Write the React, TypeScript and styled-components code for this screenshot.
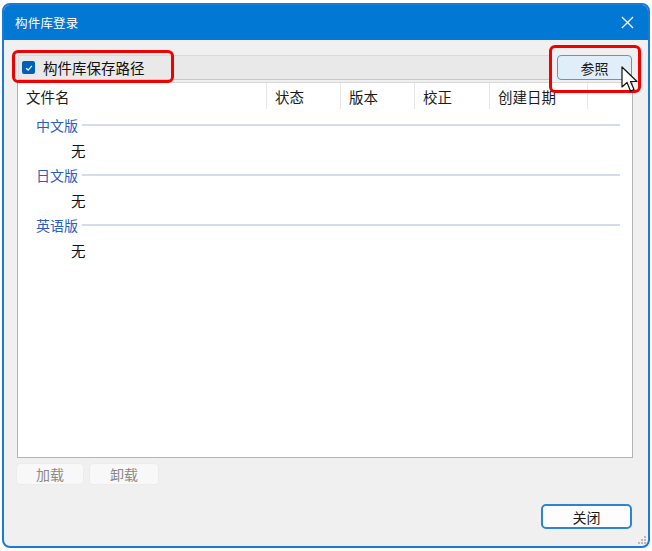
import styled, { createGlobalStyle } from 'styled-components';

const GlobalStyle = createGlobalStyle`
  html, body {
    margin: 0;
    padding: 0;
    background: #ffffff;
  }
  body {
    font-family: "Noto Sans CJK SC", "Noto Sans", sans-serif;
  }
`;

const columns = [
  { label: '文件名', width: 249 },
  { label: '状态', width: 74 },
  { label: '版本', width: 74 },
  { label: '校正', width: 75 },
  { label: '创建日期', width: 98 },
];

const groups = ['中文版', '日文版', '英语版'];

export default function App() {
  return (
    <>
      <GlobalStyle />
      <Page>
        <Window>
          <TitleBar>
            <span className="title">构件库登录</span>
            <CloseIcon viewBox="0 0 14 14">
              <path d="M1 1 L13 13 M13 1 L1 13" />
            </CloseIcon>
          </TitleBar>
          <Body>
            <PathRow>
              <PathField>
                <CheckBox>
                  <svg viewBox="0 0 12 12" width="10" height="10">
                    <path d="M2.5 6.2 L5 8.5 L9.5 3.5" />
                  </svg>
                </CheckBox>
                <span>构件库保存路径</span>
              </PathField>
              <BrowseButton>参照</BrowseButton>
              <Highlight $left={-6} $top={-5} $width={162} $height={33} />
              <Highlight $left={531} $top={-10} $width={92} $height={48} />
              <Cursor viewBox="0 0 20 30">
                <path d="M2 2 L2 22 L7 17.5 L10.5 26 L14 24.5 L10.5 16.5 L17 16.5 Z" />
              </Cursor>
            </PathRow>
            <ListPanel>
              <HeaderRow>
                {columns.map((c) => (
                  <HeaderCell key={c.label} $width={c.width}>
                    {c.label}
                  </HeaderCell>
                ))}
                <HeaderCell $width={0} $last />
              </HeaderRow>
              {groups.map((g) => (
                <div key={g}>
                  <GroupRow>
                    <span>{g}</span>
                    <GroupLine />
                  </GroupRow>
                  <ItemRow>无</ItemRow>
                </div>
              ))}
            </ListPanel>
            <ActionRow>
              <SmallButton $width={68}>加载</SmallButton>
              <SmallButton $width={70}>卸载</SmallButton>
            </ActionRow>
            <Footer>
              <CloseButton>关闭</CloseButton>
            </Footer>
            <Grip viewBox="0 0 10 10">
              <rect x="7" y="1" width="2" height="2" />
              <rect x="4" y="4" width="2" height="2" />
              <rect x="7" y="4" width="2" height="2" />
              <rect x="1" y="7" width="2" height="2" />
              <rect x="4" y="7" width="2" height="2" />
              <rect x="7" y="7" width="2" height="2" />
            </Grip>
          </Body>
        </Window>
      </Page>
    </>
  );
}

const Page = styled.div`
  padding: 3px 0 0 2px;
  width: 652px;
  height: 551px;
  box-sizing: border-box;
`;

const Window = styled.div`
  width: 648px;
  height: 545px;
  box-sizing: border-box;
  border: 2px solid #1a7ad4;
  border-radius: 8px;
  overflow: hidden;
  display: flex;
  flex-direction: column;
  background: #f0f0f0;
`;

const TitleBar = styled.div`
  height: 35px;
  flex: none;
  background: #0078d4;
  color: #ffffff;
  display: flex;
  align-items: center;
  justify-content: space-between;
  padding: 0 14px 0 11px;
  font-size: 12.5px;
  .title {
    letter-spacing: 0.2px;
  }
`;

const CloseIcon = styled.svg`
  width: 13px;
  height: 13px;
  stroke: #ffffff;
  stroke-width: 1.4;
  fill: none;
`;

const Body = styled.div`
  flex: 1;
  position: relative;
  display: flex;
  flex-direction: column;
  padding: 15px 13px 0 13px;
`;

const PathRow = styled.div`
  position: relative;
  display: flex;
  align-items: center;
  gap: 7px;
  height: 25px;
  margin-left: 1px;
`;

const PathField = styled.div`
  width: 532px;
  height: 25px;
  box-sizing: border-box;
  display: flex;
  align-items: center;
  gap: 8px;
  padding-left: 3px;
  background: #e9e9e9;
  border: 1px solid #dadada;
  border-bottom-color: #c8c8c8;
  font-size: 14.5px;
  color: #111111;
`;

const CheckBox = styled.span`
  width: 13px;
  height: 13px;
  border-radius: 2px;
  background: #005fb8;
  display: inline-flex;
  align-items: center;
  justify-content: center;
  svg {
    stroke: #ffffff;
    stroke-width: 1.5;
    fill: none;
  }
`;

const BrowseButton = styled.button`
  width: 75px;
  height: 25px;
  box-sizing: border-box;
  border: 1px solid #4a9de0;
  border-radius: 4px;
  background: #e0eef9;
  font-family: inherit;
  font-size: 14px;
  color: #1b1b1b;
  padding: 0;
`;

const Highlight = styled.div<{ $left: number; $top: number; $width: number; $height: number }>`
  position: absolute;
  left: ${(p) => p.$left}px;
  top: ${(p) => p.$top}px;
  width: ${(p) => p.$width}px;
  height: ${(p) => p.$height}px;
  box-sizing: border-box;
  border: 3px solid #f00000;
  border-radius: 6px;
  pointer-events: none;
  z-index: 2;
`;

const Cursor = styled.svg`
  position: absolute;
  left: 602px;
  top: 10px;
  width: 20px;
  height: 30px;
  fill: #ffffff;
  stroke: #111111;
  stroke-width: 1.2;
  stroke-linejoin: round;
  z-index: 3;
`;

const ListPanel = styled.div`
  margin-top: 2px;
  width: 616px;
  height: 376px;
  box-sizing: border-box;
  background: #ffffff;
  border: 1px solid #b4b4b4;
  border-top-color: #d8d8d8;
`;

const HeaderRow = styled.div`
  display: flex;
  height: 30px;
  align-items: stretch;
`;

const HeaderCell = styled.div<{ $width: number; $last?: boolean }>`
  width: ${(p) => p.$width}px;
  flex: ${(p) => (p.$last ? '1' : 'none')};
  box-sizing: border-box;
  padding: 3px 0 0 8px;
  font-size: 14.5px;
  color: #1b1b1b;
  border-right: ${(p) => (p.$last ? 'none' : '1px solid #e6e6e6')};
  margin: 0 0 4px 0;
`;

const GroupRow = styled.div`
  display: flex;
  align-items: center;
  height: 25px;
  margin-top: -1px;
  margin-bottom: 1px;
  padding: 0 12px 0 18px;
  gap: 4px;
  font-size: 14px;
  color: #2c5cc4;
`;

const GroupLine = styled.div`
  flex: 1;
  height: 2px;
  background: #d2dcf0;
`;

const ItemRow = styled.div`
  height: 25px;
  display: flex;
  align-items: center;
  padding-left: 53px;
  font-size: 14.5px;
  color: #111111;
`;

const ActionRow = styled.div`
  display: flex;
  gap: 5px;
  margin-top: 5px;
  margin-left: -1px;
`;

const SmallButton = styled.button<{ $width: number }>`
  width: ${(p) => p.$width}px;
  height: 22px;
  box-sizing: border-box;
  border: 1px solid #ececec;
  border-radius: 4px;
  background: #f8f8f8;
  color: #8a8a8a;
  font-family: inherit;
  font-size: 14px;
  padding: 0;
`;

const Footer = styled.div`
  display: flex;
  justify-content: flex-end;
  margin-top: 19px;
  padding-right: 3px;
`;

const CloseButton = styled.button`
  width: 91px;
  height: 25px;
  box-sizing: border-box;
  border: 2px solid #2d83d4;
  border-radius: 5px;
  background: #fdfdfd;
  color: #1b1b1b;
  font-family: inherit;
  font-size: 14px;
  padding: 0;
`;

const Grip = styled.svg`
  position: absolute;
  right: 1px;
  bottom: 1px;
  width: 10px;
  height: 10px;
  fill: #b8b8b8;
`;
